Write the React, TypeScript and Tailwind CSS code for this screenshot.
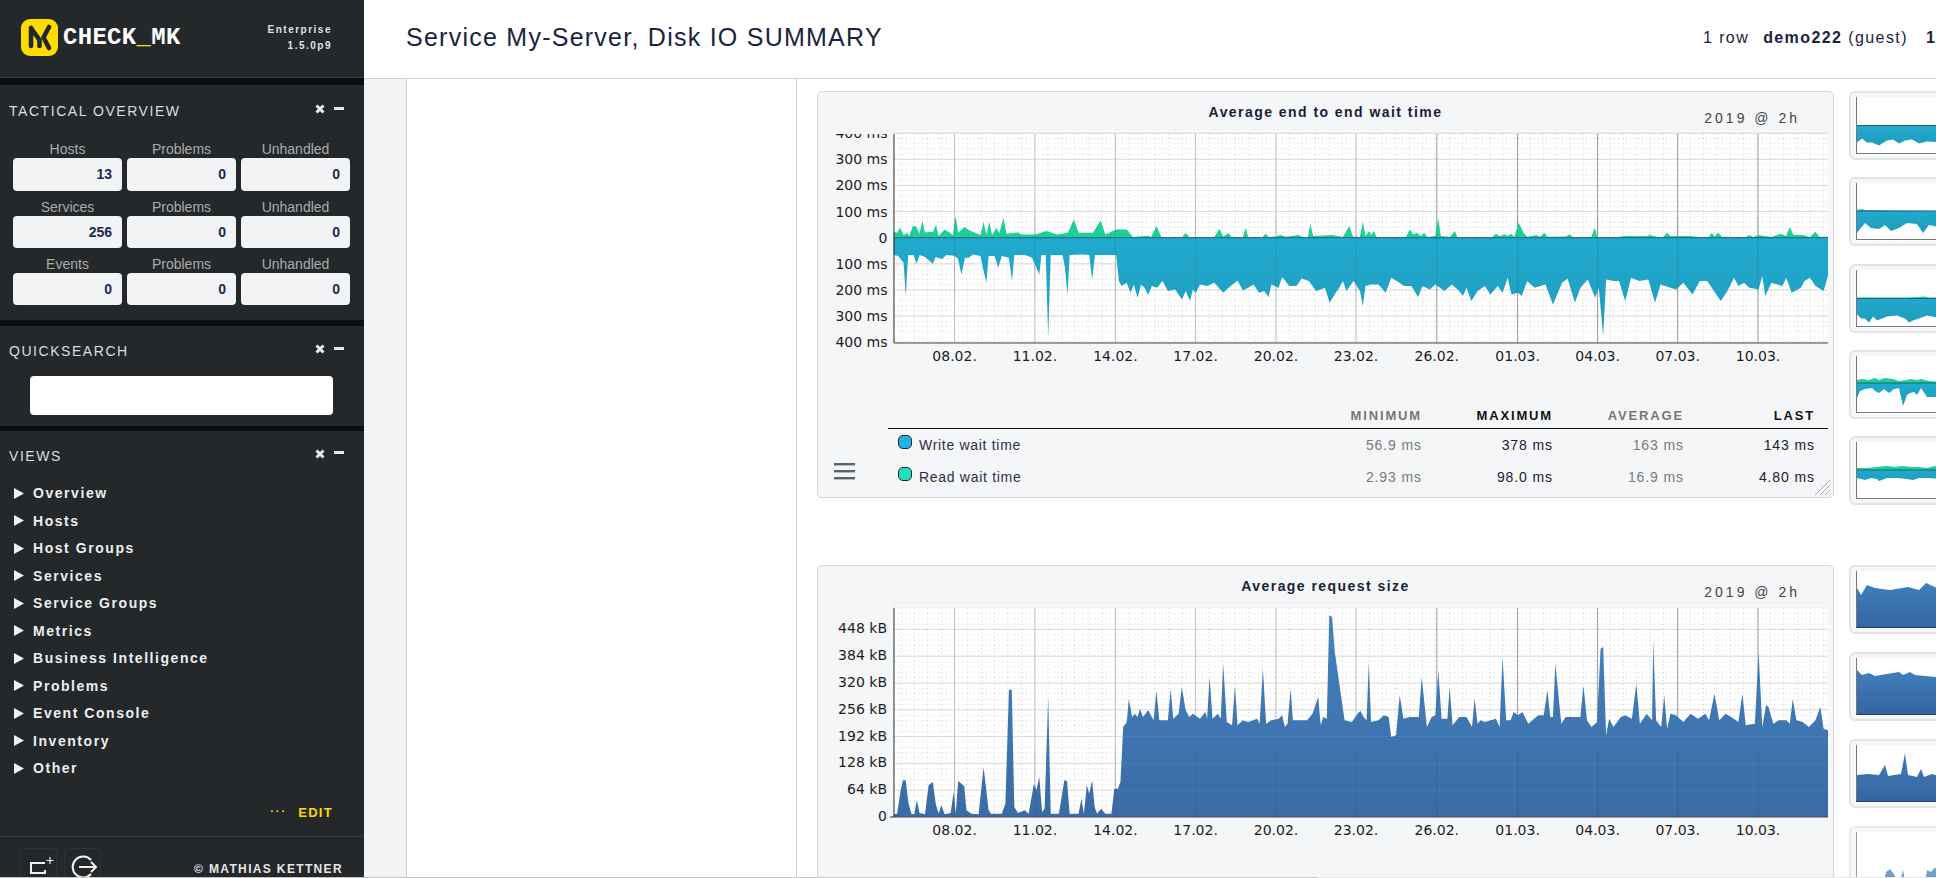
import React from "react";

const sans = "font-['Liberation_Sans',Arial,sans-serif]";

type Pts = number[];
const pairs = (a: Pts) => {
  const r: [number, number][] = [];
  for (let i = 0; i + 1 < a.length; i += 2) r.push([a[i], a[i + 1]]);
  return r;
};
// traced values: left half and right half were read at different horizontal scales
const trace = (l: Pts, r: Pts): [number, number][] => [
  ...pairs(l).map(([x, h]) => [800 + x / 2.8 - 818, h / 3] as [number, number]),
  ...pairs(r).map(([x, h]) => [1360 + x / 2.722 - 818, h / 3] as [number, number]),
];
const area = (pts: [number, number][], base: number, dir: number) =>
  `M${pts[0][0].toFixed(1)} ${base} ` +
  pts.map(([x, h]) => `L${x.toFixed(1)} ${(base + dir * h).toFixed(1)}`).join(" ") +
  ` L${pts[pts.length - 1][0].toFixed(1)} ${base} Z`;

const green = trace(
  [262,18,272,15,280,30,290,8,300,14,306,5,316,36,326,34,334,12,343,50,350,16,372,18,381,38,388,5,405,25,420,14,428,8,436,65,443,14,460,32,475,22,490,15,505,8,514,48,522,8,530,48,538,8,550,30,558,14,570,60,578,12,610,16,620,10,660,10,690,20,720,10,750,15,767,55,780,15,820,15,842,52,855,10,885,25,915,25,932,2,975,6,983,2,998,35,1012,2,1070,2,1080,14,1090,2,1160,2,1174,26,1185,4,1200,14,1208,2,1240,2,1248,30,1255,2,1295,2,1304,12,1312,2,1330,4,1345,8,1360,3,1395,8,1410,2,1422,2,1429,42,1437,5,1490,8,1520,2,1538,35,1548,4,1568,2],
  [0,5,8,48,15,5,25,20,30,8,38,20,45,2,125,2,136,25,145,10,155,15,165,5,175,15,183,2,205,5,213,58,220,5,245,2,258,20,265,2,360,2,370,12,380,5,395,10,402,5,412,12,420,2,432,45,445,15,455,3,480,8,490,2,502,15,510,3,560,4,570,10,580,2,630,2,639,30,646,2,700,2,720,5,780,5,790,8,810,2,825,2,836,15,845,5,900,5,920,2,950,3,958,15,965,4,975,15,985,3,1050,2,1060,8,1070,2,1085,8,1120,2,1145,12,1160,5,1170,32,1180,8,1205,8,1225,2,1240,18,1250,3,1274,3]
);
const cyan = trace(
  [262,52,275,55,290,75,296,175,303,52,318,52,326,78,335,52,350,58,372,78,380,58,398,64,410,52,432,54,442,62,452,110,462,60,472,60,485,50,505,55,514,100,522,135,528,55,545,55,555,90,565,55,585,60,594,130,600,52,630,52,650,60,670,110,676,52,688,52,695,295,702,52,735,52,742,90,749,172,755,52,790,50,810,52,818,125,826,52,885,52,893,130,900,145,915,135,925,165,935,140,945,180,955,140,965,150,975,172,985,145,1000,150,1015,130,1030,160,1050,155,1070,185,1080,160,1092,190,1100,155,1108,165,1120,140,1140,145,1160,135,1185,165,1200,150,1225,128,1240,158,1255,150,1270,140,1285,165,1300,160,1312,178,1320,140,1340,150,1350,118,1370,145,1390,145,1405,122,1425,130,1445,160,1470,150,1483,195,1500,165,1510,150,1520,130,1530,160,1550,130,1568,160],
  [0,160,8,205,15,145,30,140,50,140,70,165,85,120,100,130,120,145,140,145,158,178,170,145,190,155,205,140,230,160,250,140,270,160,280,175,290,150,303,190,320,160,340,145,355,170,375,145,388,165,402,120,412,170,430,165,440,175,455,130,475,150,505,140,525,200,550,135,565,122,585,195,600,150,620,125,640,180,650,150,662,295,670,125,690,130,705,130,722,190,738,120,760,130,785,125,803,195,818,140,860,155,880,135,905,170,925,130,945,130,982,190,1000,160,1018,120,1030,145,1045,135,1060,150,1085,155,1095,115,1103,175,1120,135,1150,145,1160,120,1175,165,1200,150,1210,130,1225,120,1240,145,1262,160,1274,115]
);
const size = trace(
  [262,8,272,10,282,80,288,110,296,110,304,40,312,10,320,8,327,50,335,12,350,8,360,95,372,105,380,40,388,10,396,35,405,8,422,12,430,75,436,10,443,108,460,92,466,20,480,10,500,8,514,150,528,20,535,10,565,10,575,40,585,382,593,382,600,30,610,12,630,20,640,10,655,100,662,80,670,120,678,15,685,25,695,360,702,10,725,10,740,110,748,108,755,10,780,10,788,55,795,10,803,95,810,70,818,110,825,30,832,10,843,25,855,10,872,10,880,85,890,85,897,105,905,270,915,285,921,355,930,300,938,310,945,300,952,325,960,300,975,320,990,290,998,380,1006,290,1030,290,1038,385,1045,295,1060,310,1069,390,1080,320,1090,300,1100,310,1120,295,1135,315,1140,295,1147,420,1155,295,1170,310,1178,295,1185,460,1195,285,1210,275,1218,395,1225,275,1240,290,1255,285,1280,295,1287,280,1296,445,1305,280,1320,290,1340,295,1350,305,1358,270,1365,280,1374,385,1380,290,1420,290,1435,310,1451,360,1458,275,1465,300,1475,295,1482,605,1490,600,1497,500,1510,400,1525,290,1545,285,1565,315,1568,315],
  [0,320,10,300,18,290,24,465,30,285,50,290,65,305,78,300,85,240,98,245,108,365,118,295,135,300,160,300,168,420,182,270,195,300,205,305,213,440,222,295,238,295,244,390,252,275,270,300,290,300,305,270,312,355,320,280,328,290,340,285,370,295,380,270,388,480,398,290,410,290,418,315,430,305,442,315,458,280,485,305,500,305,510,380,518,300,525,300,532,460,548,280,560,300,600,300,608,395,618,290,630,270,645,285,655,505,662,510,670,245,678,295,690,270,710,300,722,305,740,295,752,400,762,280,780,310,795,290,798,530,806,290,820,270,828,365,836,265,845,310,860,305,880,285,900,310,920,295,940,310,950,290,965,370,978,290,995,310,1010,300,1030,285,1041,370,1050,275,1075,280,1085,495,1095,270,1105,335,1112,330,1125,280,1140,290,1160,290,1170,280,1178,355,1188,290,1205,285,1222,270,1240,290,1253,330,1262,265,1274,260]
);

const L = 76, R = 1010, T = 6, B = 215;
const minors = Array.from({ length: 70 }, (_, i) => 83 + i * 13.375).filter((x) => x < R);
const dates = ["08.02.","11.02.","14.02.","17.02.","20.02.","23.02.","26.02.","01.03.","04.03.","07.03.","10.03."];
const dateX = [136.6,216.9,297.4,377.6,458,538,618.8,699.6,779.6,859.7,940];

function Grid({ hs, step, top }: { hs: number[]; step: number; top: number }) {
  const fine: number[] = [];
  for (let y = top; y < B; y += step) fine.push(y);
  return (
    <g>
      <rect x={L} y={T} width={R - L} height={B - T} fill="#fff" />
      {fine.map((y) => (
        <line key={y} x1={L} x2={R} y1={y} y2={y} stroke="#d6d6d6" strokeWidth="1" strokeDasharray="1 3" />
      ))}
      {minors.map((x) => (
        <line key={x} x1={x} x2={x} y1={T} y2={B} stroke="#d6d6d6" strokeWidth="1" strokeDasharray="1 3" />
      ))}
      {hs.map((y) => (
        <line key={y} x1={L} x2={R} y1={y} y2={y} stroke="#dadadc" strokeWidth="1" />
      ))}
      {dateX.map((x, i) => (
        <line key={x} x1={x} x2={x} y1={T} y2={B} stroke={i < 6 ? "#c2c2c2" : "#9c9c9c"} strokeWidth="1" />
      ))}
    </g>
  );
}

function Axes() {
  return (
    <g>
      <line x1={L} x2={L} y1={T} y2={B} stroke="#2b2b2b" strokeWidth="1" />
      <line x1={L} x2={R} y1={B} y2={B} stroke="#4a4a4a" strokeWidth="1" />
      {dates.map((d, i) => (
        <text key={d} x={dateX[i]} y={233} textAnchor="middle" className="font-['DejaVu_Sans',sans-serif] text-[14px] fill-[#1c1c1c]">
          {d}
        </text>
      ))}
    </g>
  );
}

const labelCls = "font-['DejaVu_Sans',sans-serif] text-[14px] fill-[#1c1c1c]";

function WaitChart() {
  const zero = 109.7;
  const hs = [-4, -3, -2, -1, 1, 2, 3, 4].map((k) => zero + k * 26.13);
  const labels: [string, number][] = [
    ["400 ms", -4],["300 ms", -3],["200 ms", -2],["100 ms", -1],["0", 0],["100 ms", 1],["200 ms", 2],["300 ms", 3],["400 ms", 4],
  ];
  return (
    <svg width="1014" height="240" className="block">
      <defs>
        <linearGradient id="cy" x1="0" x2="0" y1="0" y2="1">
          <stop offset="0" stopColor="#20a9cf" />
          <stop offset="1" stopColor="#1f9dbc" />
        </linearGradient>
        <clipPath id="clipTop"><rect x="0" y={T} width="80" height="230" /></clipPath>
      </defs>
      <Grid hs={hs} step={26.13 / 5} top={zero - 4 * 26.13} />
      <path d={area(green, zero, -1)} fill="#1ccf9f" />
      <path d={area(cyan, zero, 1)} fill="url(#cy)" />
      {dateX.map((x) => (
        <line key={x} x1={x} x2={x} y1={zero - 20} y2={zero + 55} stroke="#000" strokeOpacity="0.1" />
      ))}
      <line x1={L} x2={R} y1={zero} y2={zero} stroke="#24626a" strokeWidth="1" />
      <g clipPath="url(#clipTop)">
        {labels.map(([t, k], i) => (
          <text key={i} x={69.5} y={zero + k * 26.13 + 5} textAnchor="end" className={labelCls}>{t}</text>
        ))}
      </g>
      <Axes />
    </svg>
  );
}

function SizeChart() {
  const zero = 215;
  const hs = [1, 2, 3, 4, 5, 6, 7].map((k) => zero - k * 26.8);
  const labels = ["0", "64 kB", "128 kB", "192 kB", "256 kB", "320 kB", "384 kB", "448 kB"];
  return (
    <svg width="1014" height="240" className="block">
      <defs>
        <linearGradient id="bl" x1="0" x2="0" y1="0" y2="1">
          <stop offset="0" stopColor="#4080bf" />
          <stop offset="1" stopColor="#3669a3" />
        </linearGradient>
      </defs>
      <Grid hs={hs} step={26.8 / 5} top={zero - 8 * 26.8} />
      <path d={area(size, zero, -1)} fill="url(#bl)" fillOpacity="0.98" />
      {hs.slice(0, 3).map((y) => (
        <line key={y} x1={300} x2={R} y1={y} y2={y} stroke="#fff" strokeOpacity="0.08" />
      ))}
      {dateX.map((x) => (
        <line key={x} x1={x} x2={x} y1={150} y2={B} stroke="#000" strokeOpacity="0.07" />
      ))}
      {labels.map((t, i) => (
        <text key={t} x={69} y={zero - 1 - i * 26.8 + 5} textAnchor="end" className={labelCls}>{t}</text>
      ))}
      <line x1={72} x2={L} y1={zero} y2={zero} stroke="#2b2b2b" />
      <Axes />
    </svg>
  );
}

function Legend() {
  const head = `${sans} text-[13px] font-bold tracking-[1.85px] text-right`;
  const val = `${sans} text-[14px] tracking-[0.9px] text-right`;
  const rows = [
    { name: "Write wait time", c: "#22b4e0", v: ["56.9 ms", "378 ms", "163 ms", "143 ms"] },
    { name: "Read wait time", c: "#22e0bb", v: ["2.93 ms", "98.0 ms", "16.9 ms", "4.80 ms"] },
  ];
  return (
    <div className="flex items-end pt-[40px] pb-[4px]">
      <svg width="22" height="17" className="ml-[16px] mr-[32px] mb-[13px] shrink-0">
        <rect x="0" y="0" width="21" height="2.4" fill="#55656e" />
        <rect x="0" y="7" width="21" height="2.4" fill="#55656e" />
        <rect x="0" y="14" width="21" height="2.4" fill="#55656e" />
      </svg>
      <div className="w-[940px]">
        <div className="grid grid-cols-[1fr_131px_131px_131px_131px] h-[21px] items-start border-b border-[#111] pr-[13px] leading-[15px]">
          <span />
          <span className={`${head} text-[#767676]`}>MINIMUM</span>
          <span className={`${head} text-[#111]`}>MAXIMUM</span>
          <span className={`${head} text-[#767676]`}>AVERAGE</span>
          <span className={`${head} text-[#111]`}>LAST</span>
        </div>
        {rows.map((r) => (
          <div key={r.name} className="grid grid-cols-[1fr_131px_131px_131px_131px] h-[32px] items-center pr-[13px]">
            <span className={`${sans} flex items-center pl-[10px] text-[14px] tracking-[0.7px] text-[#2a3147]`}>
              <span className="mr-[7px] -mt-[6px] h-[14px] w-[14px] rounded-[5px] border border-[#1f2937]" style={{ background: r.c }} />
              {r.name}
            </span>
            {r.v.map((v, i) => (
              <span key={i} className={`${val} ${i % 2 ? "text-[#1b2033]" : "text-[#7a7a7a]"}`}>{v}</span>
            ))}
          </div>
        ))}
      </div>
    </div>
  );
}

function BigCard({ title, last, children }: { title: string; last?: boolean; children: React.ReactNode }) {
  return (
    <div className="relative w-[1017px] h-[407px] shrink-0 rounded-[5px] border border-[#d4d6de] bg-[#f5f6f8]">
      <div className="grid grid-cols-[1fr_auto_1fr] h-[36px]">
        <span />
        <span className={`${sans} pt-[10px] text-[14px] font-bold tracking-[1.45px] text-[#1a2138]`}>{title}</span>
        <span className={`${sans} justify-self-end pt-[18px] pr-[33px] text-[14px] leading-[16px] tracking-[3px] text-[#444]`}>2019 @ 2h</span>
      </div>
      {children}
      {last && (
        <svg width="15" height="16" className="absolute right-[3px] bottom-[2px]">
          <path d="M0 16 L15 1 M5 16 L15 6 M10 16 L15 11" stroke="#a9adb5" strokeWidth="1" />
        </svg>
      )}
    </div>
  );
}

type SmallDef = { zero: number; blue?: number[]; green?: number[]; up?: number[]; faded?: boolean };
function SmallCard({ d, id }: { d: SmallDef; id: string }) {
  const p = (a: number[]) => pairs(a).map(([x, h]) => [x + 1, h] as [number, number]);
  return (
    <div className={`h-[69px] w-[240px] shrink-0 rounded-[6px] border-2 border-[#e2e3e8] bg-[#f5f6f8] pt-[4px] pl-[5px] ${d.faded ? "opacity-70" : ""}`}>
      <svg width="232" height="58" className="block bg-white">
        <defs>
          <linearGradient id={id} x1="0" x2="0" y1="0" y2="1">
            <stop offset="0" stopColor={d.up ? "#3f7fbd" : "#20a9cf"} />
            <stop offset="1" stopColor={d.up ? "#35659f" : "#1f9dbc"} />
          </linearGradient>
        </defs>
        {d.up && <path d={area(p(d.up), 57, -1)} fill={`url(#${id})`} />}
        {d.green && <path d={area(p(d.green), d.zero, -1)} fill="#1ccf9f" />}
        {d.blue && <path d={area(p(d.blue), d.zero, 1)} fill={`url(#${id})`} />}
        {d.blue && <line x1="1" x2="232" y1={d.zero} y2={d.zero} stroke="#24626a" />}
        <line x1="0.5" x2="0.5" y1="0" y2="57" stroke="#777" />
        <line x1="0" x2="232" y1="56.5" y2="56.5" stroke={d.up ? "#1e3f6e" : "#777"} />
      </svg>
    </div>
  );
}

const smallTop: SmallDef[] = [
  { zero: 28.5, blue: [0,17,5,13,10,17,15,17,22,20,30,15,36,14,42,18,48,15,55,14,62,18,70,16,85,17] },
  { zero: 28, green: [0,1,5,2,8,1,85,0], blue: [0,22,3,18,8,12,14,17,22,18,28,14,34,20,42,17,50,12,60,13,66,22,72,14,85,17] },
  { zero: 28.5, green: [0,1,50,1,68,2,72,1,85,1], blue: [0,16,4,20,8,20,12,24,16,18,20,22,30,18,40,17,48,20,52,24,56,22,62,20,70,17,85,20] },
  { zero: 27, green: [0,3,5,4,12,3,18,5,22,3,28,5,36,4,42,2,50,3,54,4,60,3,64,4,72,2,85,1], blue: [0,15,3,8,8,6,15,5,18,8,22,10,27,6,32,10,37,6,42,5,46,23,50,12,53,10,57,9,60,12,64,5,70,14,85,14] },
  { zero: 28, green: [0,2,10,2,20,3,30,4,38,3,45,4,55,3,62,3,70,2,78,4,85,1], blue: [0,8,8,10,14,8,20,9,22,11,30,8,40,8,50,9,56,10,62,8,70,8,85,9] },
];
const smallBottom: SmallDef[] = [
  { zero: 57, up: [0,40,4,33,10,43,18,40,33,38,51,41,62,38,69,45,80,40,90,40] },
  { zero: 57, up: [0,45,5,40,12,42,18,39,30,41,42,43,46,40,53,43,58,40,80,38,90,38] },
  { zero: 57, up: [0,27,11,28,22,27,28,37,31,26,44,28,48,49,51,27,60,25,64,33,67,25,75,28,85,25,90,25] },
  { zero: 57, faded: true, up: [0,0,25,0,29,17,33,20,37,15,41,0,46,19,49.6,0,67,0,70,19,74,17,77,21,90,19] },
];

function XIcon() {
  return (
    <svg width="10" height="10" viewBox="0 0 10 10">
      <path d="M1.5 1.5 L8.5 8.5 M8.5 1.5 L1.5 8.5" stroke="#e8e8e8" strokeWidth="3" />
    </svg>
  );
}

function SectionHeader({ title, h = "h-[51px]" }: { title: string; h?: string }) {
  return (
    <div className={`flex ${h} items-center justify-between pl-[9px] pr-[20px] pt-[1px]`}>
      <span className={`${sans} text-[14px] tracking-[1.55px] text-[#d9dee2]`}>{title}</span>
      <span className="flex items-center gap-[9px] -mt-[5px]">
        <XIcon />
        <span className="h-[3px] w-[10px] -mt-[2px] bg-[#e8e8e8]" />
      </span>
    </div>
  );
}

const tactical = [
  ["Hosts", "13", "Problems", "0", "Unhandled", "0"],
  ["Services", "256", "Problems", "0", "Unhandled", "0"],
  ["Events", "0", "Problems", "0", "Unhandled", "0"],
];
const views = ["Overview","Hosts","Host Groups","Services","Service Groups","Metrics","Business Intelligence","Problems","Event Console","Inventory","Other"];

function Band({ h }: { h: string }) {
  return <div className={`${h} shrink-0 bg-[#0b0d0e]`} />;
}

function Sidebar() {
  return (
    <aside className={`${sans} flex h-full w-[364px] shrink-0 flex-col bg-[#24282b]`}>
      <div className="flex h-[78px] shrink-0 items-center pl-[21px] pr-[32px] border-b border-[#3a3e41]">
        <svg width="37" height="37" viewBox="0 0 37 37" className="mb-[3px] shrink-0">
          <rect width="37" height="37" rx="9" fill="#ffdc00" />
          <path d="M10 9 V27 M10 9 L18.5 21 V27 M28 8 L22.5 18.5 L28 29" stroke="#23272a" strokeWidth="4.6" fill="none" strokeLinecap="round" strokeLinejoin="round" />
        </svg>
        <span className="ml-[5px] font-['Liberation_Mono',monospace] text-[24px] font-bold leading-none tracking-[0.3px] text-white mb-[2px]">
          CHECK<span className="text-[#ffdc00]">_</span>MK
        </span>
        <div className="ml-auto text-right text-[10px] font-bold leading-[16px] tracking-[1.5px] text-[#dfe2e4] mb-[1px]">
          <div>Enterprise</div>
          <div>1.5.0p9</div>
        </div>
      </div>
      <Band h="h-[7px]" />
      <section className="h-[235px] shrink-0">
        <SectionHeader title="TACTICAL OVERVIEW" h="h-[52px]" />
        <div className="flex flex-col gap-[8px] pl-[13px] pr-[14px] pt-[4px]">
          {tactical.map((row, i) => (
            <div key={i} className="grid grid-cols-3 gap-x-[5px]">
              {[0, 2, 4].map((c) => (
                <div key={c}>
                  <div className="h-[17px] text-center text-[14px] leading-[16px] text-[#a9abab]">{row[c]}</div>
                  <div className={`flex ${i === 0 ? "h-[33px]" : "h-[32px]"} items-center justify-end rounded-[4px] bg-[#f2f3f5] pr-[10px] text-[14px] font-bold text-[#1d2a4f]`}>
                    {row[c + 1]}
                  </div>
                </div>
              ))}
            </div>
          ))}
        </div>
      </section>
      <Band h="h-[6px]" />
      <section className="h-[100px] shrink-0">
        <SectionHeader title="QUICKSEARCH" h="h-[50px]" />
        <div className="ml-[30px] h-[39px] w-[303px] rounded-[4px] bg-white" />
      </section>
      <Band h="h-[5px]" />
      <section className="flex min-h-0 flex-1 flex-col">
        <SectionHeader title="VIEWS" h="h-[49px]" />
        <ul className="flex flex-col">
          {views.map((v) => (
            <li key={v} className="flex h-[27.5px] items-center pl-[14px]">
              <svg width="10" height="11" viewBox="0 0 10 11" className="mb-[1px] mr-[9px] shrink-0">
                <path d="M0 0 L10 5.5 L0 11 Z" fill="#f2f2f2" />
              </svg>
              <span className="text-[14px] font-bold tracking-[1.55px] text-[#eceeef]">{v}</span>
            </li>
          ))}
        </ul>
        <div className="mt-[20px] flex h-[20px] items-center justify-end pr-[31px] text-[#ffd700]">
          <span className="mr-[11px] text-[11px] font-bold tracking-[2px] leading-none -mt-[3px]">···</span>
          <span className="text-[13px] font-bold tracking-[1.3px]">EDIT</span>
        </div>
        <div className="mt-[13px] flex flex-1 items-start justify-between border-t border-[#3a3e41] pl-[20px] pr-[21px] overflow-hidden">
          <div className="mt-[11px] flex gap-[7px]">
            <div className="h-[40px] w-[37px] rounded-[4px] border border-[#2f3336]">
              <svg width="37" height="30" viewBox="0 0 37 30">
                <path d="M24 14 H10 V24 H24 V21" stroke="#f0f0f0" strokeWidth="2" fill="none" />
                <path d="M29 8 V15 M25.5 11.5 H32.5" stroke="#f0f0f0" strokeWidth="1.2" />
              </svg>
            </div>
            <div className="h-[40px] w-[37px] rounded-[4px] border border-[#2f3336]">
              <svg width="37" height="30" viewBox="0 0 37 30">
                <path d="M26 11 A10.5 10.5 0 1 0 26 25" stroke="#f0f0f0" strokeWidth="2" fill="none" />
                <path d="M14 18 H31 M26 13 L31 18 L26 23" stroke="#f0f0f0" strokeWidth="2" fill="none" />
              </svg>
            </div>
          </div>
          <span className="mt-[23px] text-[12px] font-bold tracking-[1.35px] text-[#e4e6e8]">© MATHIAS KETTNER</span>
        </div>
      </section>
    </aside>
  );
}

export default function App() {
  return (
    <div className={`${sans} relative flex h-[878px] w-[1936px] overflow-hidden bg-white`}>
      <Sidebar />
      <main className="flex h-full min-w-0 flex-1 flex-col">
        <header className="flex h-[79px] shrink-0 items-center overflow-hidden border-b border-[#cfd1d9] pl-[42px] pb-[3px] text-[#1b2340]">
          <h1 className="w-[1297px] shrink-0 text-[25px] font-normal tracking-[1.25px]">Service My-Server, Disk IO SUMMARY</h1>
          <div className="flex items-baseline whitespace-nowrap text-[16px] tracking-[1.4px]">
            <span className="mr-[14px]">1 row</span>
            <b className="mr-[6px]">demo222</b>
            <span className="mr-[18px]">(guest)</span>
            <b>12:34</b>
          </div>
        </header>
        <div className="flex min-h-0 flex-1">
          <div className="w-[43px] shrink-0 border-r border-[#cfd1d9] bg-[#f3f4f6]" />
          <div className="w-[390px] shrink-0 border-r border-[#cfd1d9] bg-white" />
          <div className="flex min-w-0 flex-1 flex-col overflow-hidden pl-[20px] pt-[12px]">
            <div className="flex gap-[15px]">
              <BigCard title="Average end to end wait time" last>
                <WaitChart />
                <Legend />
              </BigCard>
              <div className="flex flex-col gap-[17.3px]">
                {smallTop.map((d, i) => <SmallCard key={i} d={d} id={`st${i}`} />)}
              </div>
            </div>
            <div className="mt-[60px] flex gap-[15px]">
              <BigCard title="Average request size">
                <SizeChart />
              </BigCard>
              <div className="flex flex-col gap-[17.8px]">
                {smallBottom.map((d, i) => <SmallCard key={i} d={d} id={`sb${i}`} />)}
              </div>
            </div>
          </div>
        </div>
      </main>
      <div className="absolute bottom-0 left-0 h-px w-full bg-[#e8e8ea]" />
      <div className="absolute bottom-0 left-0 h-px w-[1317px] bg-[#c4c4c4]" />
    </div>
  );
}
